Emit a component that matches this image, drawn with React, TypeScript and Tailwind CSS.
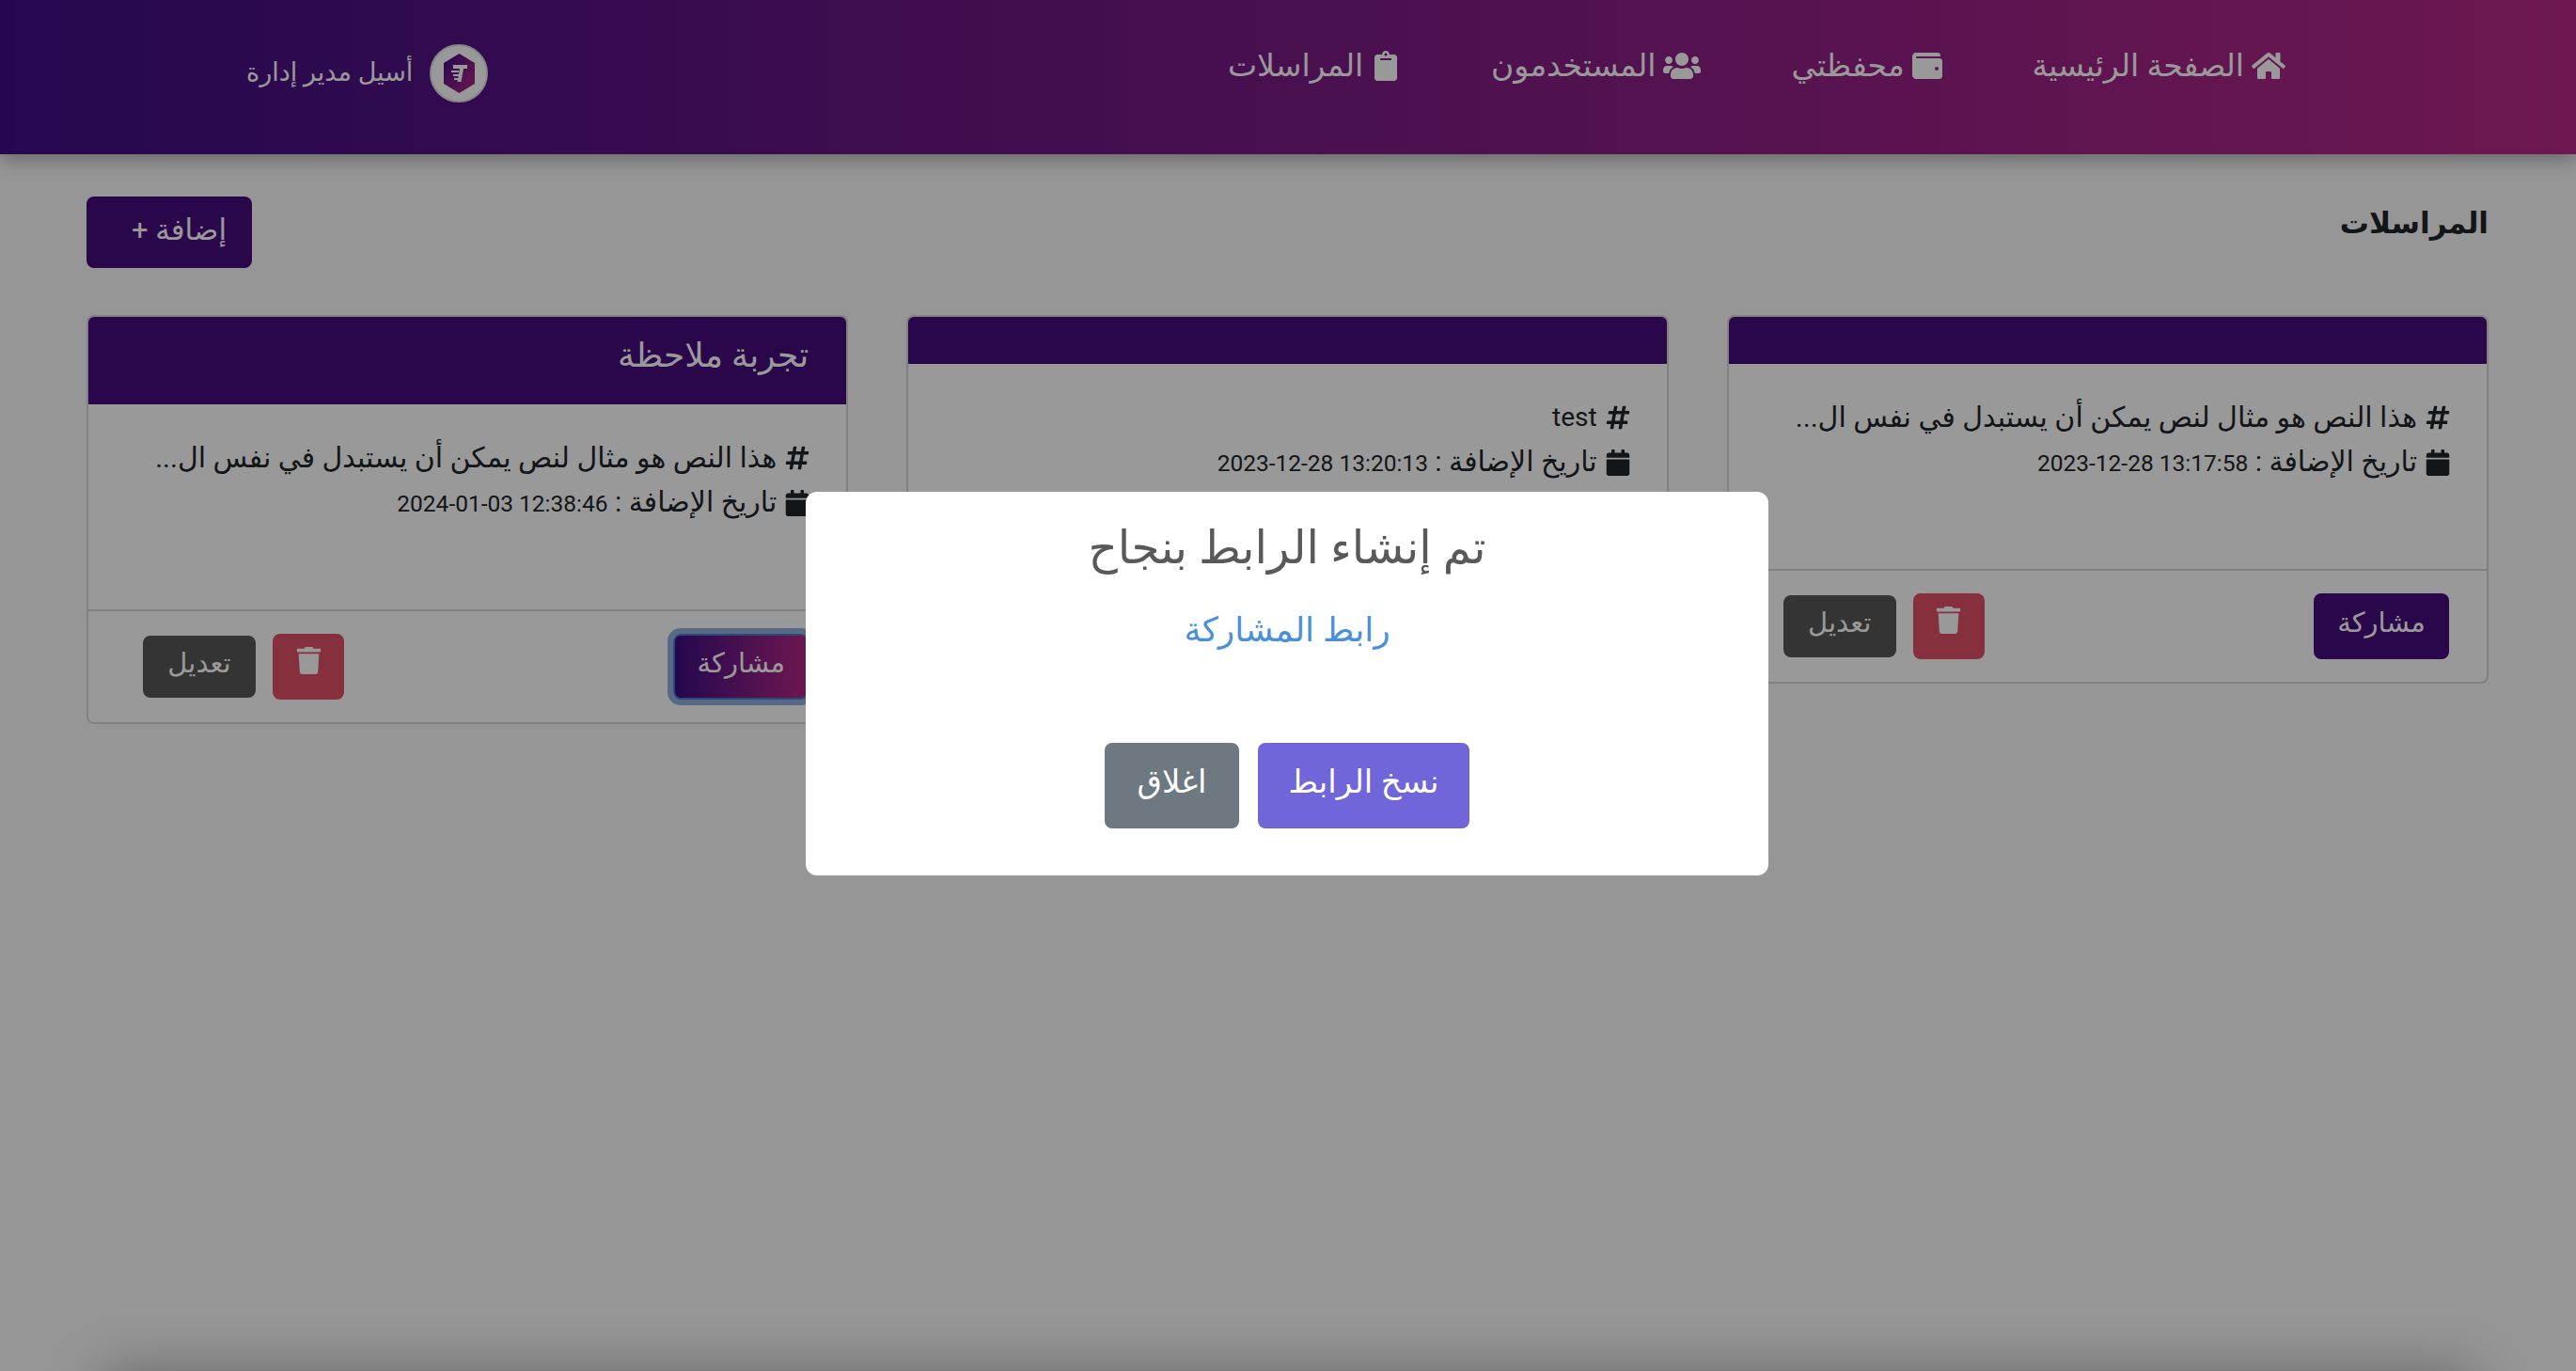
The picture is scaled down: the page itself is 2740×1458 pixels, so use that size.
import { FaCalendar, FaClipboard, FaHashtag, FaHome, FaTrash, FaUsers, FaWallet } from 'react-icons/fa'

const navLinks = [
  { label: 'الصفحة الرئيسية', icon: FaHome, size: 'text-[36px]' },
  { label: 'محفظتي', icon: FaWallet, size: 'text-[32px]' },
  { label: 'المستخدمون', icon: FaUsers, size: 'text-[40px]' },
  { label: 'المراسلات', icon: FaClipboard, size: 'text-[32px]' },
]

const notes = [
  { title: '', body: 'هذا النص هو مثال لنص يمكن أن يستبدل في نفس ال...', date: '2023-12-28 13:17:58' },
  { title: '', body: 'test', date: '2023-12-28 13:20:13' },
  { title: 'تجربة ملاحظة', body: 'هذا النص هو مثال لنص يمكن أن يستبدل في نفس ال...', date: '2024-01-03 12:38:46', active: true },
]

function Logo() {
  return (
    <div className="flex h-[62px] w-[62px] items-center justify-center rounded-full border-2 border-[#e0e0e0] bg-white">
      <svg width="33" height="42" viewBox="0 0 33 42">
        <defs>
          <linearGradient id="logoGrad" x1="0" y1="0" x2="1" y2="1">
            <stop offset="0" stopColor="#3e0d84" />
            <stop offset="1" stopColor="#b62885" />
          </linearGradient>
        </defs>
        <polygon points="16.5,0 33,10 33,32 16.5,42 0,32 0,10" fill="url(#logoGrad)" />
        <path d="M10 12h15v4h-4l-2.5 14h-4l2.5-14h-7z" fill="#fff" />
        <rect x="8" y="18" width="8" height="2" fill="#fff" />
        <rect x="10" y="22" width="6" height="2" fill="#fff" />
        <rect x="11" y="26" width="4" height="2" fill="#fff" />
      </svg>
    </div>
  )
}

function NoteCard({ title, body, date, active }: { title: string; body: string; date: string; active?: boolean }) {
  return (
    <div className="rounded-lg border-2 border-[#d8d8d8] bg-white">
      {/* Card header */}
      <div className={`rounded-t-md bg-[#460c7c] px-[40px] text-[36px] text-white ${title ? 'flex h-[93px] items-center pb-[12px]' : 'h-[50px]'}`}>
        {title}
      </div>

      {/* Card body */}
      <div className="h-[218px] px-[40px] pt-[33px] text-[30px] leading-[47px] text-[#212529]">
        <div className="flex items-center gap-[8px]">
          <FaHashtag className="-ms-[2px] shrink-0 text-[28px]" />
          <span className={body === 'test' ? 'text-[28px]' : ''}>{body}</span>
        </div>
        <div className="flex items-center gap-[8px]">
          <FaCalendar className="-ms-[2px] shrink-0 text-[28px]" />
          <span>
            تاريخ الإضافة : <span dir="ltr" className="text-[24.5px]">{date}</span>
          </span>
        </div>
      </div>

      {/* Card footer */}
      <div className="flex h-[120px] items-start justify-between border-t-2 border-[#d8d8d8] px-[40px] pt-[24px] text-[29px] text-white">
        <button
          className={`flex h-[70px] w-[144px] items-center justify-center rounded-lg pb-[6px] ${
            active
              ? 'border-2 border-[#4a7cc8] bg-linear-to-r/srgb from-[#3e0d84] to-[#b62885] shadow-[0_0_0_6px_rgba(110,150,210,0.75)]'
              : 'bg-[#460c7c]'
          }`}
        >
          مشاركة
        </button>
        <div className="flex items-start gap-[18px] pl-[18px]">
          <button className="flex h-[70px] w-[76px] items-start justify-center rounded-lg bg-[#de5064] pt-[14px]">
            <FaTrash className="text-[29px]" />
          </button>
          <button className="mt-[2px] flex h-[66px] w-[120px] items-center justify-center rounded-lg bg-[#585858] pb-[6px]">
            تعديل
          </button>
        </div>
      </div>
    </div>
  )
}

export default function App() {
  return (
    <div dir="rtl" className="relative h-screen overflow-hidden bg-[#fafafa] font-['Roboto','DejaVu_Sans',sans-serif]">
      {/* Navbar */}
      <nav className="relative flex h-[164px] items-start justify-between bg-linear-to-l/srgb from-[#b62885] to-[#3e0d84] pl-[262px] pr-[309px] shadow-[0_4px_20px_rgba(0,0,0,0.35)]">
        <div className="flex items-center gap-[96px] pt-[50px]">
          {navLinks.map(({ label, icon: Icon, size }) => (
            <a key={label} href="#" className="flex h-[40px] items-center gap-[8px] text-[33px] leading-[40px] text-white">
              <Icon className={size} />
              {label}
            </a>
          ))}
        </div>
        <div className="flex items-center gap-[18px] pt-[47px] text-[27px] text-white">
          <Logo />
          <span className="pb-[2px]">أسيل مدير إدارة</span>
        </div>
      </nav>

      <main className="h-[1294px] pl-[92px] pr-[93px] pt-[45px]">
        <div className="flex items-start justify-between">
          <h1 className="pt-[6px] text-[31px] font-bold text-[#212529]">المراسلات</h1>
          <button className="flex h-[76px] w-[176px] items-center rounded-lg bg-[#460c7c] pb-[4px] pr-[27px] text-[31px] text-white">
            إضافة +
          </button>
        </div>

        <div className="mt-[50px] grid grid-cols-3 items-start gap-x-[62px]">
          {notes.map((note) => (
            <NoteCard key={note.date} {...note} />
          ))}
        </div>
      </main>

      <footer className="mx-[110px] h-[80px] bg-white shadow-[0_0_60px_rgba(0,0,0,0.3)]" />

      {/* Modal backdrop */}
      <div className="absolute inset-0 flex items-start justify-center bg-black/40 pr-[2px] pt-[523px]">
        <div className="flex h-[408px] w-[1024px] flex-col items-center rounded-xl bg-white">
          <h2 className="mt-[32px] text-[48.5px] leading-[56px] text-[#595959]">تم إنشاء الرابط بنجاح</h2>
          <a href="#" className="mt-[36px] text-[36px] leading-[46px] text-[#4a90d9]">رابط المشاركة</a>
          <div className="mt-[97px] flex gap-[20px]">
            <button className="h-[91px] w-[225px] rounded-lg bg-[#7066d9] pb-[8px] text-[34px] text-white">نسخ الرابط</button>
            <button className="h-[91px] w-[143px] rounded-lg bg-[#6e7881] pb-[8px] text-[34px] text-white">اغلاق</button>
          </div>
        </div>
      </div>
    </div>
  )
}
